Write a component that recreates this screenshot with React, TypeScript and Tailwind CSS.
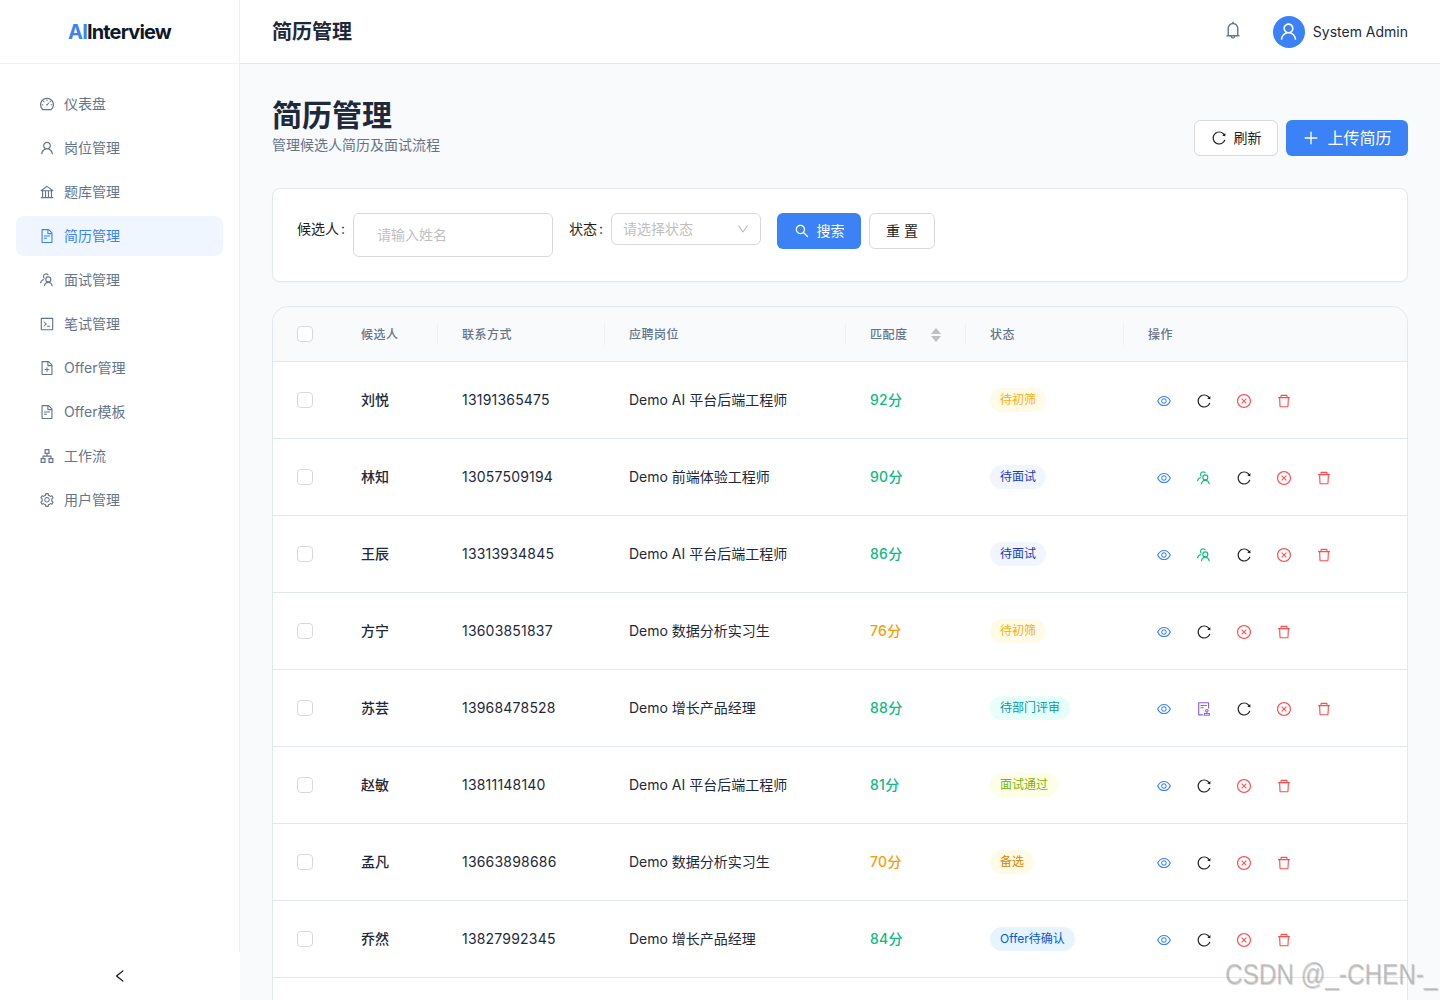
import React from "react";
import {
  AiOutlineDashboard, AiOutlineUser, AiOutlineBank, AiOutlineFileText, AiOutlineCode, AiOutlineFileAdd,
  AiOutlineApartment, AiOutlineSetting, AiOutlineBell, AiOutlineReload, AiOutlinePlus, AiOutlineSearch,
  AiOutlineDown, AiOutlineEye, AiOutlineCloseCircle, AiOutlineDelete, AiOutlineAudit, AiOutlineLeft,
} from "react-icons/ai";

const font = "font-['Inter','Noto_Sans_CJK_SC',sans-serif]";

function Interview({ className }: { className?: string }) {
  return (
    <svg viewBox="0 0 16 16" fill="none" stroke="currentColor" strokeWidth="1.15" className={className}>
      <circle cx="9.300" cy="7.400" r="2.500" />
      <path d="M5.400 14.300c.2-2.300 1.800-4 3.900-4s3.700 1.700 3.900 4" />
      <path d="M9.400 3.300A2.600 2.600 0 0 0 4.500 4.500c0 .8.300 1.500.9 2" />
      <path d="M1.500 11.200c.3-1.800 1.500-3.300 3.400-3.700" />
    </svg>
  );
}

const menu = [
  { label: "仪表盘", Icon: AiOutlineDashboard },
  { label: "岗位管理", Icon: AiOutlineUser },
  { label: "题库管理", Icon: AiOutlineBank },
  { label: "简历管理", Icon: AiOutlineFileText, active: true },
  { label: "面试管理", Icon: Interview },
  { label: "笔试管理", Icon: AiOutlineCode },
  { label: "Offer管理", Icon: AiOutlineFileAdd },
  { label: "Offer模板", Icon: AiOutlineFileText },
  { label: "工作流", Icon: AiOutlineApartment },
  { label: "用户管理", Icon: AiOutlineSetting },
];

const tags: Record<string, string> = {
  待初筛: "bg-[#fffbe6] text-[#faad14]",
  待面试: "bg-[#f0f5ff] text-[#1d39c4]",
  待部门评审: "bg-[#e6fffb] text-[#08979c]",
  面试通过: "bg-[#fcffe6] text-[#7cb305]",
  备选: "bg-[#fffbe6] text-[#d48806]",
  Offer待确认: "bg-[#e6f4ff] text-[#0958d9]",
};

const rows = [
  { name: "刘悦", phone: "13191365475", job: "Demo AI 平台后端工程师", score: "92分", status: "待初筛", extra: "" },
  { name: "林知", phone: "13057509194", job: "Demo 前端体验工程师", score: "90分", status: "待面试", extra: "team" },
  { name: "王辰", phone: "13313934845", job: "Demo AI 平台后端工程师", score: "86分", status: "待面试", extra: "team" },
  { name: "方宁", phone: "13603851837", job: "Demo 数据分析实习生", score: "76分", status: "待初筛", extra: "", low: true },
  { name: "苏芸", phone: "13968478528", job: "Demo 增长产品经理", score: "88分", status: "待部门评审", extra: "audit" },
  { name: "赵敏", phone: "13811148140", job: "Demo AI 平台后端工程师", score: "81分", status: "面试通过", extra: "" },
  { name: "孟凡", phone: "13663898686", job: "Demo 数据分析实习生", score: "70分", status: "备选", extra: "", low: true },
  { name: "乔然", phone: "13827992345", job: "Demo 增长产品经理", score: "84分", status: "Offer待确认", extra: "" },
];

const gridCols = "grid grid-cols-[64px_101px_167px_241px_120px_158px_1fr] items-center";

function Check() {
  return <span className="block h-4 w-4 rounded-[4px] border border-[#d9d9d9] bg-white" />;
}

function Head({ children, sep = true }: { children: React.ReactNode; sep?: boolean }) {
  return (
    <div className="relative flex h-full items-center pl-6 pt-px text-xs font-medium tracking-[0.5px] text-[#64748b]">
      {children}
      {sep && <span className="absolute right-0 top-1/2 h-[22px] w-px -translate-y-1/2 bg-[#eef1f5]" />}
    </div>
  );
}

function Op({ children, className }: { children: React.ReactNode; className: string }) {
  return <button className={`flex h-8 w-8 items-center justify-center text-base ${className}`}>{children}</button>;
}

export default function App() {
  return (
    <div className={`${font} flex h-[1000px] w-[1440px] overflow-hidden bg-[#f8fafc] text-[#1e293b]`}>
      <aside className="flex w-[240px] shrink-0 flex-col bg-white">
        <div className="flex min-h-0 flex-1 flex-col border-r border-[#f0f0f0]">
          <div className="flex h-16 shrink-0 items-center justify-center border-b border-[#f0f0f0] text-xl font-bold tracking-[-0.85px] text-[#0f172a]">
            <span className="text-[#3b82f6]">AI</span>Interview
          </div>
          <nav className="flex flex-col gap-1 py-5 pl-4 pr-4">
            {menu.map(({ label, Icon, active }) => (
              <div
                key={label}
                className={`flex h-10 items-center gap-[9px] rounded-lg pl-[23px] text-sm ${active ? "bg-[#eff6ff] text-[#3b82f6]" : "text-[#64748b]"}`}
              >
                <Icon className="h-4 w-4" />
                <span>{label}</span>
              </div>
            ))}
          </nav>
        </div>
        <div className="flex h-12 shrink-0 items-center justify-center text-[#1f1f1f]">
          <AiOutlineLeft className="h-4 w-4" />
        </div>
      </aside>

      <div className="flex min-w-0 flex-1 flex-col">
        <header className="flex h-16 shrink-0 items-center justify-between border-b border-[#e2e8f0] bg-white px-8">
          <h1 className="pt-px text-xl font-semibold text-[#1e293b]">简历管理</h1>
          <div className="flex items-center">
            <AiOutlineBell className="mb-[3px] mr-[30px] h-5 w-5 text-[#64748b]" />
            <div className="mr-2 flex h-8 w-8 items-center justify-center rounded-full bg-[#3b82f6] text-[21px] text-white">
              <AiOutlineUser />
            </div>
            <span className="text-sm font-normal text-[#1e293b]">System Admin</span>
          </div>
        </header>

        <main className="min-h-0 flex-1 overflow-hidden px-8 pt-8">
          <div className="mb-8 flex h-[60px] items-end justify-between">
            <div className="mb-px">
              <h2 className="text-[30px] font-bold leading-[40px] text-[#1e293b]">简历管理</h2>
              <p className="text-sm leading-[20px] text-[#64748b]">管理候选人简历及面试流程</p>
            </div>
            <div className="flex gap-2">
              <button className="flex h-9 w-[84px] items-center justify-center gap-[7px] rounded-md border border-[#d9d9d9] bg-white text-sm text-[#1f1f1f]">
                <AiOutlineReload className="h-4 w-4" />
                刷新
              </button>
              <button className="flex h-9 w-[122px] items-center justify-center gap-[7px] rounded-md bg-[#3b82f6] text-base text-white">
                <AiOutlinePlus className="h-[18px] w-[18px]" />
                上传简历
              </button>
            </div>
          </div>

          <section className="mb-6 flex h-[94px] items-start rounded-lg border border-[#e2e8f0] bg-white p-6 shadow-[0_1px_2px_rgba(0,0,0,0.03)]">
            <span className="flex h-8 items-center text-sm text-[#1f1f1f]">候选人</span>
            <span className="ml-0.5 mr-2 flex h-8 items-center text-sm text-[#1f1f1f]">:</span>
            <div className="flex h-11 w-[200px] items-center rounded-md border border-[#d9d9d9] bg-white pl-[23px] text-sm text-[#bfbfbf]">
              请输入姓名
            </div>
            <span className="ml-4 flex h-8 items-center text-sm text-[#1f1f1f]">状态</span>
            <span className="ml-0.5 mr-2 flex h-8 items-center text-sm text-[#1f1f1f]">:</span>
            <div className="flex h-8 w-[150px] items-center justify-between rounded-md border border-[#d9d9d9] bg-white pl-[11px] pr-[10px] text-sm text-[#bfbfbf]">
              请选择状态
              <AiOutlineDown className="h-[14px] w-[14px]" />
            </div>
            <button className="ml-4 flex h-9 w-[84px] items-center justify-center gap-[7px] rounded-md bg-[#3b82f6] text-sm text-white">
              <AiOutlineSearch className="h-4 w-4" />
              搜索
            </button>
            <button className="ml-2 flex h-9 w-[66px] items-center justify-center rounded-md border border-[#d9d9d9] bg-white pl-1 text-sm tracking-[4px] text-[#1f1f1f]">
              重置
            </button>
          </section>

          <section className="rounded-t-2xl border border-[#e2e8f0] bg-white">
            <div className={`${gridCols} h-[55px] rounded-t-2xl border-b border-[#e2e8f0] bg-[#f8fafc]`}>
              <div className="pl-6"><Check /></div>
              <Head>候选人</Head>
              <Head>联系方式</Head>
              <Head>应聘岗位</Head>
              <Head>
                匹配度
                <span className="ml-[23px] flex flex-col gap-[2px]">
                  <span className="h-0 w-0 border-x-[5px] border-b-[6px] border-x-transparent border-b-[#bfbfbf]" />
                  <span className="h-0 w-0 border-x-[5px] border-t-[6px] border-x-transparent border-t-[#bfbfbf]" />
                </span>
              </Head>
              <Head>状态</Head>
              <Head sep={false}>操作</Head>
            </div>
            {rows.map((r) => (
              <div key={r.name} className={`${gridCols} h-[77px] border-b border-[#e2e8f0] text-sm`}>
                <div className="pl-6"><Check /></div>
                <div className="pl-6 font-medium">{r.name}</div>
                <div className="pl-6 tracking-[0.2px]">{r.phone}</div>
                <div className="pl-6">{r.job}</div>
                <div className={`pl-6 font-medium tracking-[0.3px] ${r.low ? "text-[#f59e0b]" : "text-[#10b981]"}`}>{r.score}</div>
                <div className="pl-6">
                  <span className={`-mt-0.5 inline-flex h-6 items-center rounded-full px-[10px] text-xs font-normal ${tags[r.status]}`}>
                    {r.status}
                  </span>
                </div>
                <div className="flex gap-2 pl-6 pt-0.5">
                  <Op className="text-[#3b82f6]"><AiOutlineEye /></Op>
                  {r.extra === "team" && <Op className="text-[#10b981]"><Interview className="h-4 w-4" /></Op>}
                  {r.extra === "audit" && <Op className="text-[#8b5cf6]"><AiOutlineAudit /></Op>}
                  <Op className="text-[#1f1f1f]"><AiOutlineReload /></Op>
                  <Op className="text-[#ff4d4f]"><AiOutlineCloseCircle /></Op>
                  <Op className="text-[#ff4d4f]"><AiOutlineDelete /></Op>
                </div>
              </div>
            ))}
            <div className="h-20" />
          </section>
        </main>
      </div>

      <div className="pointer-events-none absolute left-[1225px] top-[956px] origin-left scale-x-[0.81] whitespace-nowrap font-['Liberation_Sans',sans-serif] text-[30px] leading-[36px] text-[rgba(150,150,150,0.45)] [text-shadow:1px_1px_1px_rgba(120,120,120,0.3)]">
        CSDN @_-CHEN-_
      </div>
    </div>
  );
}
